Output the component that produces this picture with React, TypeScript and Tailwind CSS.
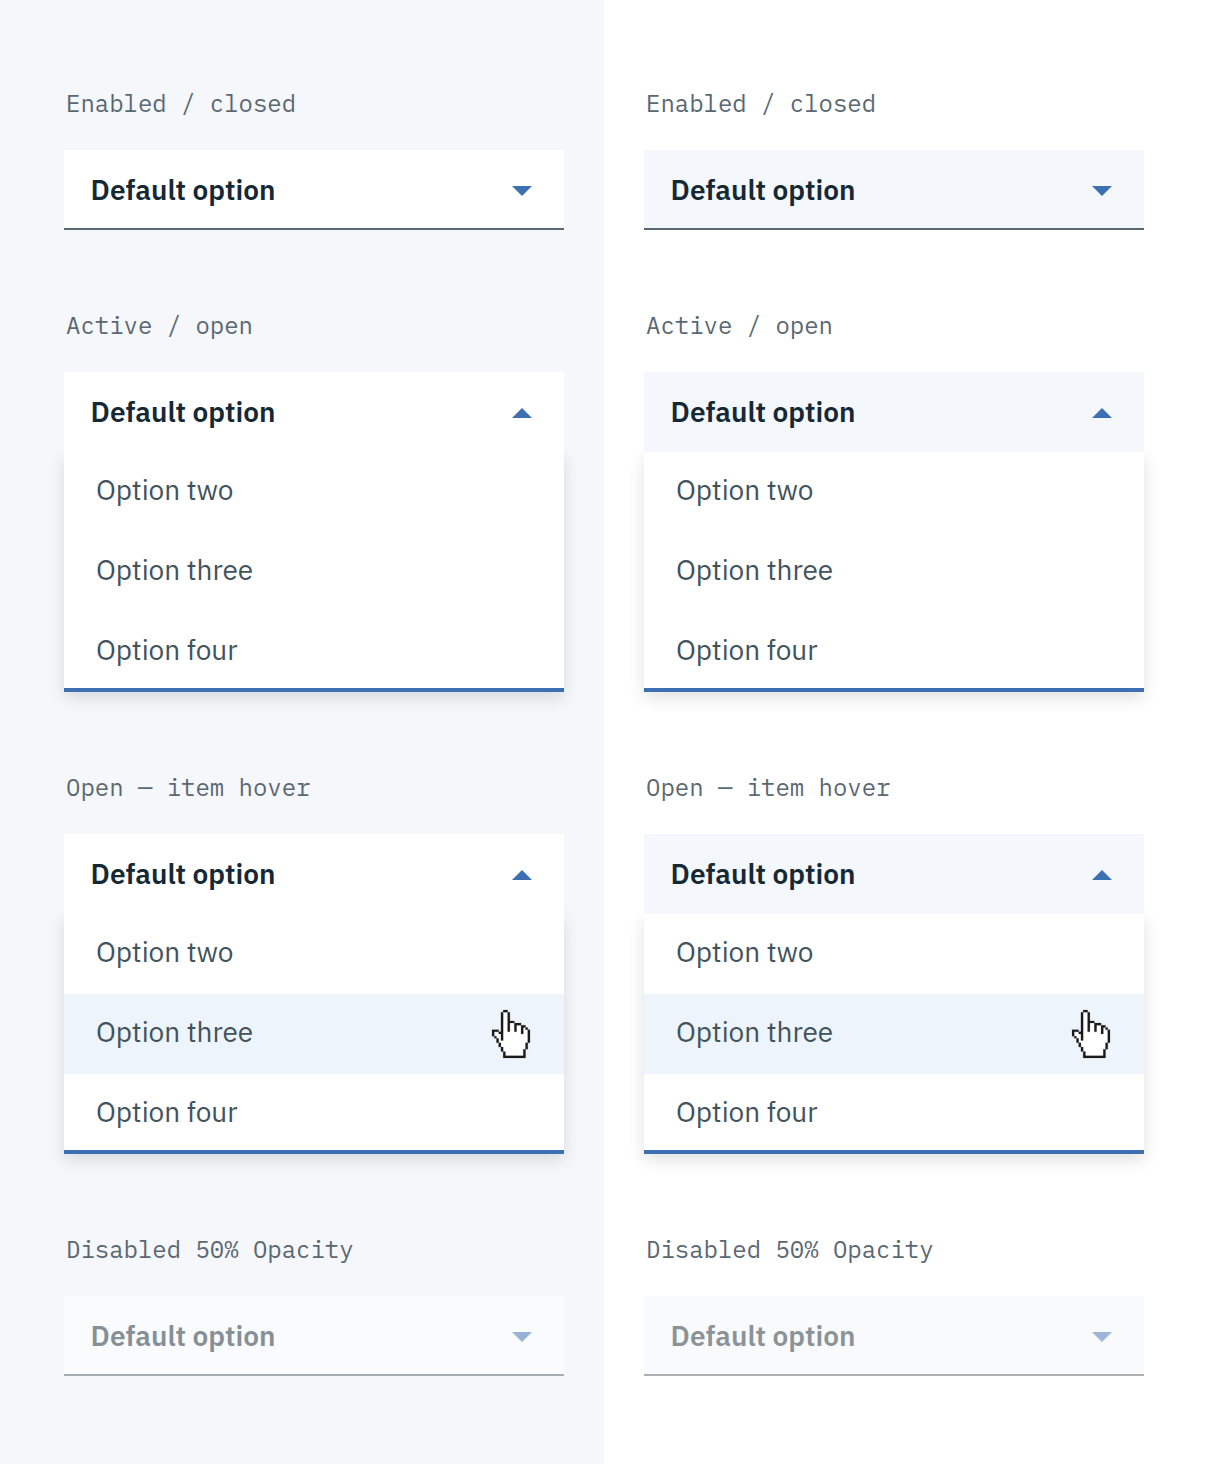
type Variant = "closed" | "open" | "hover" | "disabled";

const OPTIONS = ["Option two", "Option three", "Option four"];

const STATES: { label: string; variant: Variant }[] = [
  { label: "Enabled / closed", variant: "closed" },
  { label: "Active / open", variant: "open" },
  { label: "Open — item hover", variant: "hover" },
  { label: "Disabled 50% Opacity", variant: "disabled" },
];

// Pointer bitmap: "#" is the outline, "o" the fill.
const HAND = [
  ".....##..........",
  "....#oo#.........",
  "....#oo#.........",
  "....#oo#.........",
  "....#oo#.........",
  "....#oo###.......",
  "....#oo#oo###....",
  "....#oo#oo#oo##..",
  "....#oo#oo#oo#o#.",
  "###.#oo#oo#oo#oo#",
  "#oo##oooooooo#oo#",
  "#ooo#ooooooooooo#",
  ".#oo#ooooooooooo#",
  "..#o#ooooooooooo#",
  "..#ooooooooooooo#",
  "...#ooooooooooo#.",
  "...#ooooooooooo#.",
  "....#oooooooooo#.",
  "....#ooooooooo#..",
  ".....#oooooooo#..",
  ".....#oooooooo#..",
  ".....##########..",
];

const cells = (mark: string) =>
  HAND.flatMap((row, y) =>
    [...row].map((c, x) => (c === mark ? `M${x} ${y}h1v1h-1z` : "")),
  ).join("");

function HandPointer() {
  return (
    <svg
      viewBox="0 0 17 22"
      preserveAspectRatio="none"
      className="absolute right-[34px] top-4 h-12 w-[38px] overflow-visible"
    >
      <path d={cells("o")} fill="#fff" stroke="#fff" strokeWidth="0.3" />
      <path d={cells("#")} fill="#1f1c1d" stroke="#1f1c1d" strokeWidth="0.08" />
    </svg>
  );
}

function Caret({ up }: { up: boolean }) {
  return (
    <svg viewBox="0 0 20 10" className={up ? "mt-[2px] h-[10px] w-5" : "h-[10px] w-5"}>
      <path d={up ? "M0 10L10 0L20 10Z" : "M0 0H20L10 10Z"} fill="#3d70b2" />
    </svg>
  );
}

function Dropdown({ variant, tinted }: { variant: Variant; tinted: boolean }) {
  const open = variant === "open" || variant === "hover";
  return (
    <div className={variant === "disabled" ? "opacity-50" : ""}>
      <div
        className={`relative z-10 flex h-20 items-center justify-between pl-[26.6px] pr-8 ${
          tinted ? "bg-[#f4f7fb]" : "bg-white"
        } ${open ? "" : "border-b-2 border-[#5a6872]"}`}
      >
        <span
          className={`font-['IBM_Plex_Sans','Noto_Sans',sans-serif] text-[28px] leading-10 font-semibold text-[#152934] ${
            open ? "" : "pt-[2px]"
          }`}
        >
          Default option
        </span>
        <div className={open ? "" : "pt-[3px]"}>
          <Caret up={open} />
        </div>
      </div>
      {open && (
        <ul className="border-b-4 border-[#3d70b2] bg-white shadow-[0_6px_16px_rgba(0,0,0,0.12)]">
          {OPTIONS.map((option, i) => (
            <li
              key={option}
              className={`relative flex items-center pl-8 font-['IBM_Plex_Sans','Noto_Sans',sans-serif] text-[28px] leading-10 tracking-[-0.03px] text-[#42535c] ${
                i === 2 ? "h-[76px]" : "h-20 pb-1"
              } ${variant === "hover" && i === 1 ? "bg-[#edf4fc]" : ""}`}
            >
              <span>{option}</span>
              {variant === "hover" && i === 1 && <HandPointer />}
            </li>
          ))}
        </ul>
      )}
    </div>
  );
}

function Column({ tinted }: { tinted: boolean }) {
  return (
    <section
      className={`flex h-full w-[604px] flex-col gap-[81px] pt-[89px] ${
        tinted ? "bg-white pl-10 pr-16" : "bg-[#f5f7fb] pl-16 pr-10"
      }`}
    >
      {STATES.map(({ label, variant }) => (
        <div key={label}>
          <h2 className="mb-[33px] h-7 pl-[2px] font-['IBM_Plex_Mono','Liberation_Mono',monospace] text-[24px] leading-7 tracking-[-0.02px] text-[#5a6872]">
            {label}
          </h2>
          <Dropdown variant={variant} tinted={tinted} />
        </div>
      ))}
    </section>
  );
}

export default function App() {
  return (
    <main className="flex h-[1464px] w-[1208px] overflow-hidden bg-white">
      <Column tinted={false} />
      <Column tinted />
    </main>
  );
}
